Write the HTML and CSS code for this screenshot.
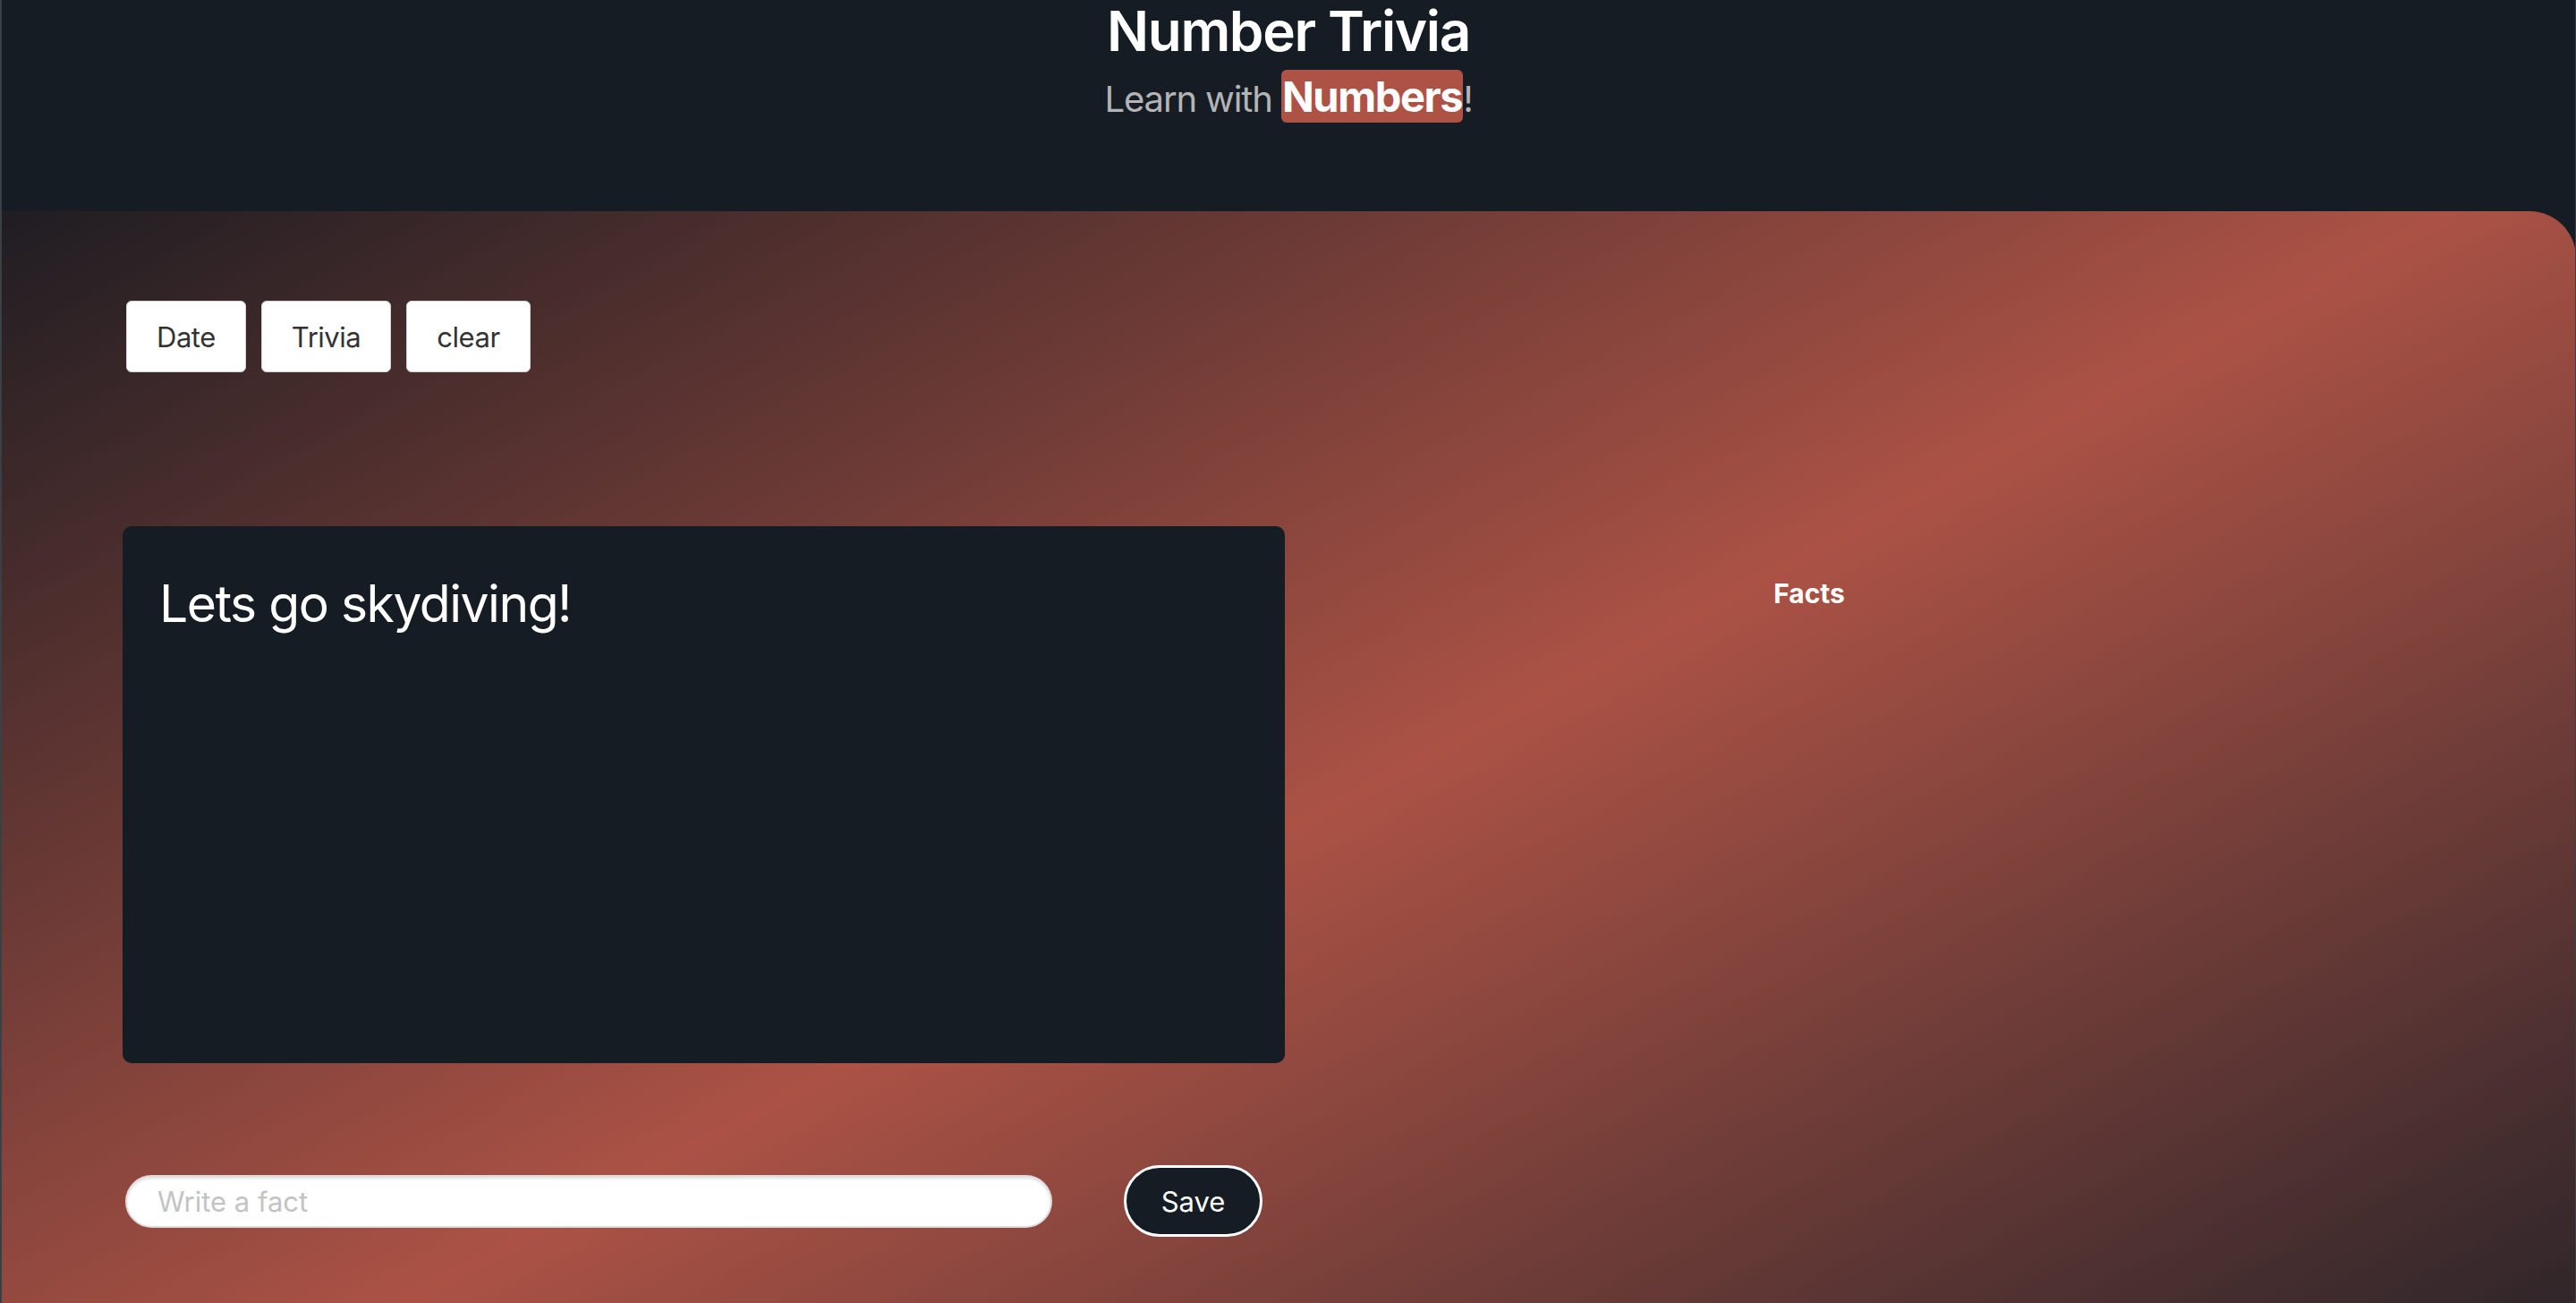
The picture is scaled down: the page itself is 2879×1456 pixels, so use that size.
FILE: index.html
```html
<!DOCTYPE html>
<html lang="en">
<head>
<meta charset="utf-8">
<title>Number Trivia</title>
<link rel="stylesheet" href="styles.css">
</head>
<body>
  <header class="hero">
    <h1 class="title">Number Trivia</h1>
    <p class="subtitle">Learn with <span class="hl">Numbers</span>!</p>
  </header>
  <main class="panel">
    <div class="modes">
      <button class="mode-btn" type="button">Date</button>
      <button class="mode-btn" type="button">Trivia</button>
      <button class="mode-btn" type="button">clear</button>
    </div>
    <div class="content">
      <div class="fact-box">Lets go skydiving!</div>
      <div class="facts">
        <h2 class="facts-title">Facts</h2>
      </div>
    </div>
    <form class="add-form">
      <input class="fact-input" type="text" placeholder="Write a fact">
      <button class="save-btn" type="button">Save</button>
    </form>
  </main>
</body>
</html>
```
FILE: styles.css
```css
html {
  background: #161c23;
}
body {
  margin: 0;
  height: 1456px;
  overflow: hidden;
  background: #161c23;
  border-left: 2px solid #3b4046;
  border-right: 1px solid #3b4046;
  font-family: Inter, "Noto Sans", sans-serif;
  color: #fff;
}
.hero {
  height: 236px;
  text-align: center;
}
.title {
  margin: 0;
  font-size: 62px;
  line-height: 70px;
  font-weight: 600;
  letter-spacing: -0.022em;
  color: #fff;
}
.subtitle {
  margin: 8px 0 0;
  font-size: 40px;
  line-height: 60px;
  letter-spacing: -0.028em;
  color: #b4b4b6;
}
.hl {
  font-size: 47px;
  font-weight: 700;
  letter-spacing: -0.03em;
  color: #fff;
  background: #ad5245;
  border-radius: 6px;
  padding: 1px 1px;
}
.panel {
  height: 1220px;
  margin-right: -1px;
  box-sizing: border-box;
  padding: 100px 0 0 135px;
  border-top-right-radius: 52px;
  background: linear-gradient(152deg, #1f1d22 0%, #ab5245 53%, #30262a 100%);
}
.modes {
  display: flex;
  gap: 17px;
  margin-left: 4px;
}
.mode-btn {
  height: 80px;
  padding: 0 33px;
  background: #fff;
  border: 1px solid #d2d2d2;
  border-radius: 6px;
  font-family: Inter, "Noto Sans", sans-serif;
  font-size: 31px;
  letter-spacing: -0.015em;
  color: #333;
}
.content {
  display: flex;
  margin-top: 172px;
}
.fact-box {
  width: 1299px;
  height: 600px;
  box-sizing: border-box;
  padding: 53px 41px;
  background: #161c23;
  border-radius: 10px;
  font-size: 57px;
  line-height: 67px;
  letter-spacing: -0.026em;
  color: #fff;
}
.facts {
  width: 1172px;
  padding-top: 57px;
  text-align: center;
}
.facts-title {
  margin: 0;
  font-size: 30px;
  line-height: 36px;
  font-weight: 700;
  color: #fff;
}
.add-form {
  display: flex;
  align-items: center;
  gap: 80px;
  margin: 114px 0 0 3px;
}
.fact-input {
  width: 1036px;
  height: 59px;
  box-sizing: border-box;
  padding: 0 34px;
  border: 2px solid #dcdcdc;
  border-radius: 30px;
  box-shadow: inset 0 2px 3px rgba(0,0,0,0.12);
  background: #fff;
  font-family: Inter, "Noto Sans", sans-serif;
  font-size: 31px;
  color: #333;
  outline: none;
}
.fact-input::placeholder {
  color: #c3c3c3;
}
.save-btn {
  width: 155px;
  height: 80px;
  background: #161c23;
  border: 3px solid #fff;
  border-radius: 40px;
  font-family: Inter, "Noto Sans", sans-serif;
  font-size: 31px;
  color: #fff;
}
```
